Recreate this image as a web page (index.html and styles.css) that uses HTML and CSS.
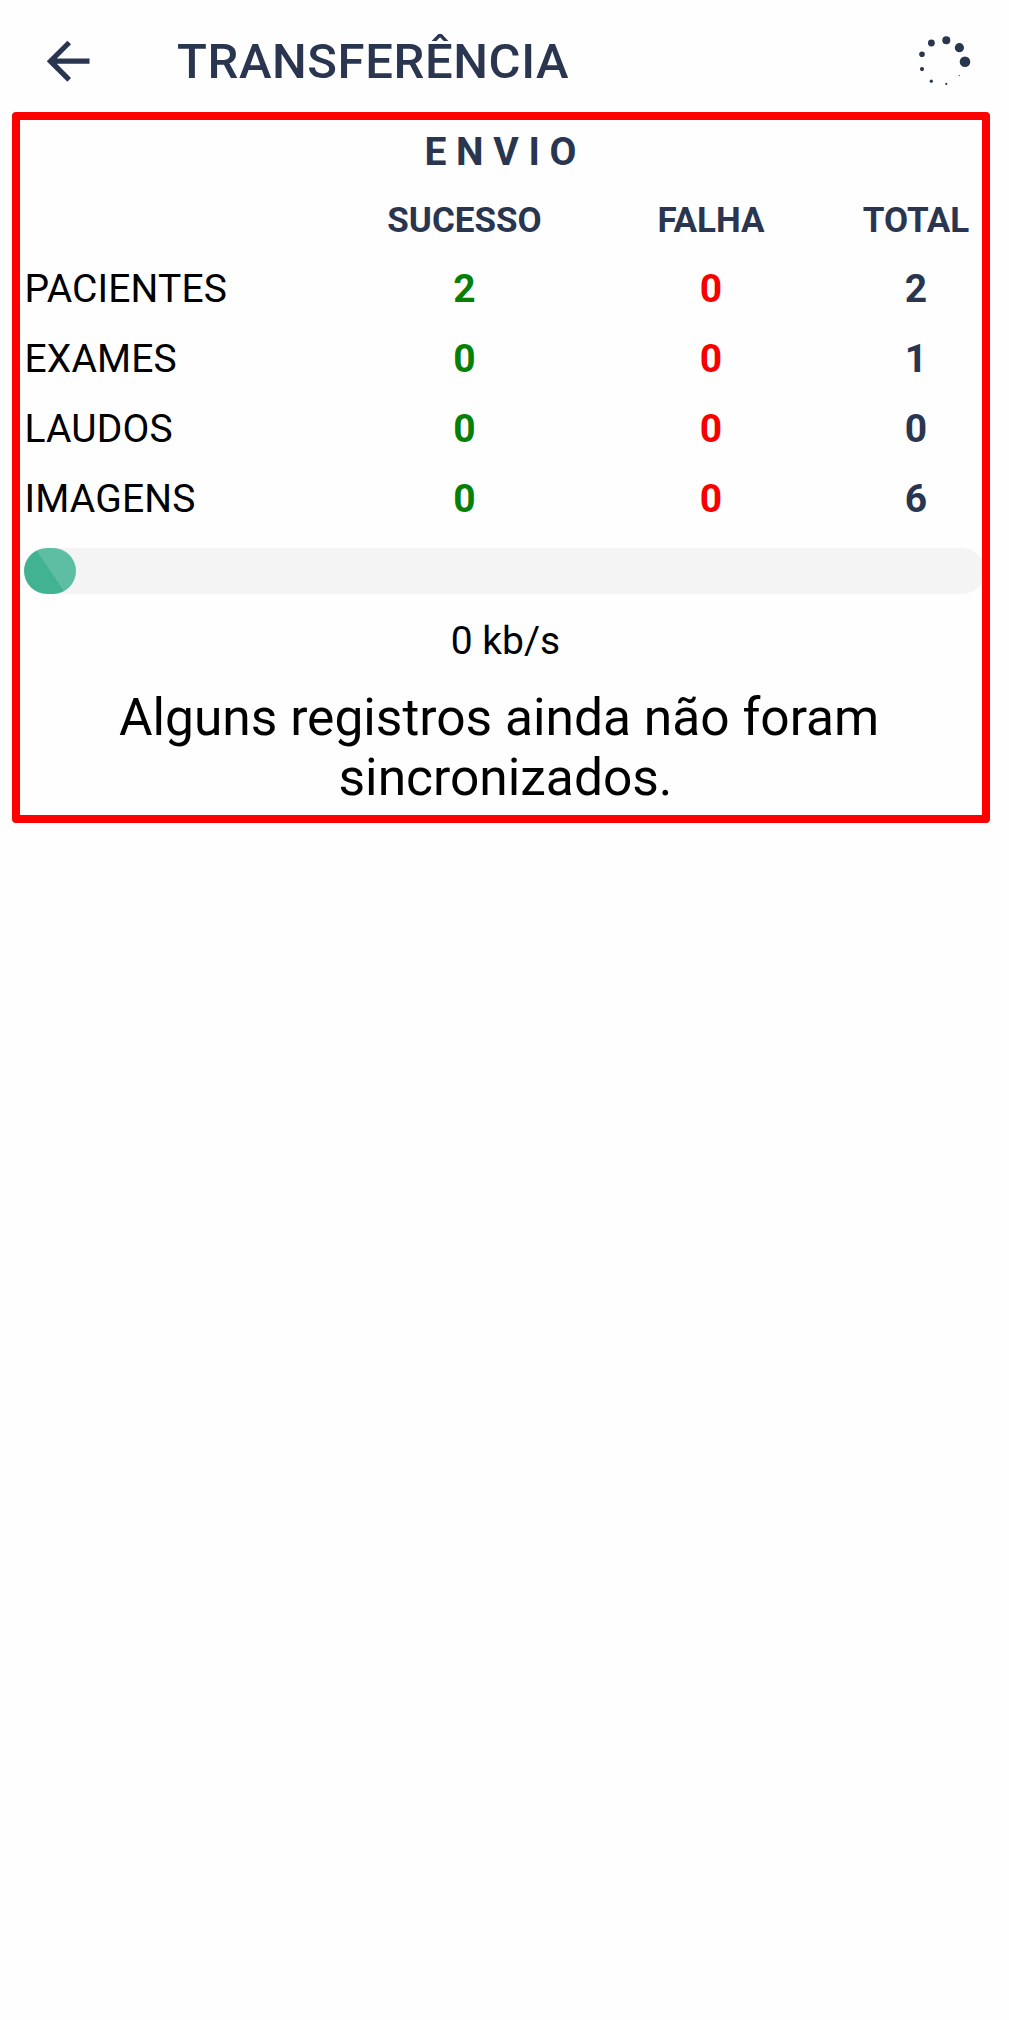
FILE: index.html
```html
<!DOCTYPE html>
<html lang="pt-BR">
<head>
<meta charset="utf-8">
<title>Transferência</title>
<link rel="stylesheet" href="styles.css">
</head>
<body>
<header class="topbar">
  <svg class="back" viewBox="0 0 44 42" aria-label="Voltar"><path d="M42.5 21.2H5M22.2 2.5 3.5 21.2 22.2 39.9" fill="none" stroke="currentColor" stroke-width="5.2"/></svg>
  <h1 class="title">TRANSFERÊNCIA</h1>
  <svg class="spinner" viewBox="0 0 56 56" fill="currentColor" aria-label="Carregando">
    <circle cx="46" cy="28.7" r="5.3"/>
    <circle cx="40.4" cy="14.7" r="4.6"/>
    <circle cx="27.3" cy="7.2" r="4"/>
    <circle cx="12.4" cy="10" r="3.4"/>
    <circle cx="3" cy="21.2" r="2.8"/>
    <circle cx="3" cy="36.1" r="2.1"/>
    <circle cx="12.3" cy="48.2" r="1.6"/>
    <circle cx="27.3" cy="50.9" r="1.1"/>
    <circle cx="40.3" cy="42.6" r=".6"/>
  </svg>
</header>
<main class="panel">
  <h2 class="section">E N V I O</h2>
  <div class="grid head"><span></span><span>SUCESSO</span><span>FALHA</span><span>TOTAL</span></div>
  <div class="grid row"><span class="label">PACIENTES</span><b class="ok">2</b><b class="fail">0</b><b>2</b></div>
  <div class="grid row"><span class="label">EXAMES</span><b class="ok">0</b><b class="fail">0</b><b>1</b></div>
  <div class="grid row"><span class="label">LAUDOS</span><b class="ok">0</b><b class="fail">0</b><b>0</b></div>
  <div class="grid row"><span class="label">IMAGENS</span><b class="ok">0</b><b class="fail">0</b><b>6</b></div>
  <div class="track"><div class="fill"></div></div>
  <p class="speed">0 kb/s</p>
  <p class="message">Alguns registros ainda não foram&nbsp;<br>sincronizados.</p>
</main>
</body>
</html>
```
FILE: styles.css
```css
* { box-sizing: border-box; margin: 0; padding: 0; }
body {
  min-height: 2020px;
  background: #fefefe;
  color: #000;
  font-family: Roboto, "Liberation Sans", sans-serif;
}
.topbar {
  display: flex;
  align-items: center;
  height: 112px;
  padding: 10px 34px 0 47px;
  color: #2a3550;
}
.back { width: 44px; height: 42px; }
.title {
  flex: 1;
  margin-left: 86px;
  padding-top: 2px;
  font-size: 49px;
  font-weight: 500;
  line-height: 60px;
  letter-spacing: 0.6px;
}
.spinner { width: 56px; height: 56px; }
.panel {
  width: 978px;
  height: 711px;
  margin-left: 12px;
  border: 8px solid #f00;
  border-radius: 4px;
  overflow: hidden;
}
.section {
  width: 961px;
  height: 64px;
  margin-left: 4px;
  padding-right: 8px;
  text-align: center;
  font-size: 39px;
  font-weight: 700;
  line-height: 65px;
  color: #2a3550;
}
.grid {
  display: grid;
  grid-template-columns: 332px 217px 276px 134px;
  padding-left: 4px;
  height: 70px;
  line-height: 72px;
  text-align: center;
  color: #2a3550;
}
.head {
  height: 69px;
  font-size: 35px;
  font-weight: 700;
  line-height: 74px;
}
.row { font-size: 39px; }
.row b { font-weight: 700; }
.row .label { padding-left: 0.5px; text-align: left; letter-spacing: 0.15px; color: #000; }
.row .ok { color: #068006; }
.row .fail { color: #f80000; }
.track {
  width: 961px;
  height: 46px;
  margin: 15px 0 0 4px;
  border-radius: 23px;
  background: #f4f4f4;
}
.fill {
  width: 52px;
  height: 46px;
  border-radius: 23px;
  background: linear-gradient(56deg, #42b392 50%, #5dbea3 51%);
}
.speed, .message { width: 963px; margin-left: 4px; text-align: center; }
.speed { margin-top: 22px; font-size: 39px; line-height: 50px; }
.message { margin-top: 22px; font-size: 51.5px; line-height: 60px; }
```
